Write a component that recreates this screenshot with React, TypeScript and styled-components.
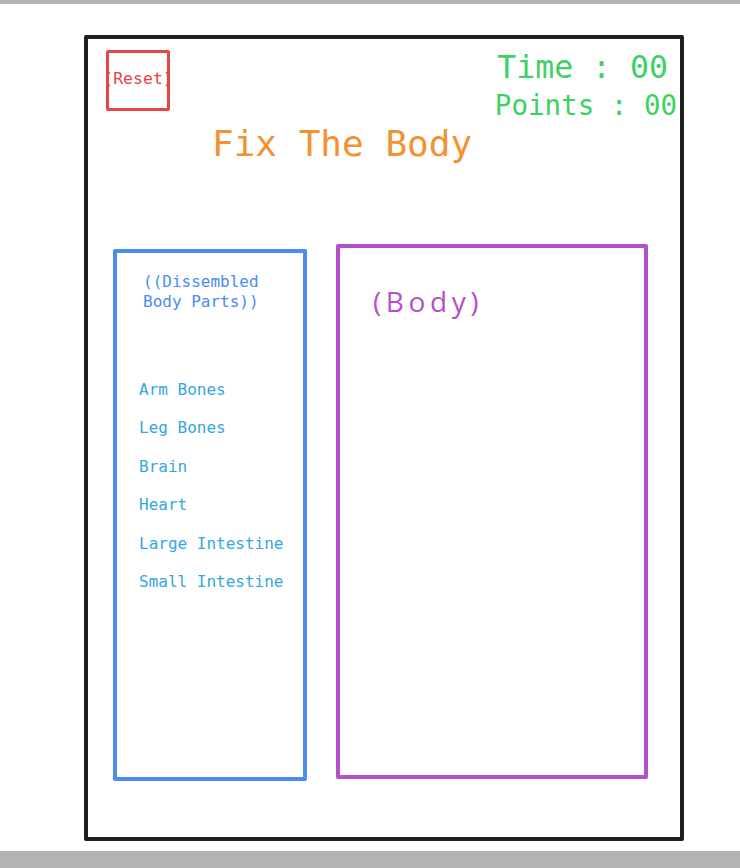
import * as React from 'react';
import styled, { createGlobalStyle } from 'styled-components';

const GlobalStyle = createGlobalStyle`
    html, body {
        margin: 0;
        padding: 0;
        background: #ffffff;
    }
    body {
        font-family: 'DejaVu Sans Mono', 'Liberation Mono', monospace;
    }
`

const Page = styled.div`
    width: 740px;
    height: 868px;
    display: flex;
    flex-direction: column;
    overflow: hidden;
`

const GreyBar = styled.div<{ $height: number }>`
    height: ${p => p.$height}px;
    background: #b3b3b3;
    flex-shrink: 0;
`

const Stage = styled.div`
    flex: 1;
    padding: 31px 0 0 84px;
`

const Frame = styled.div`
    box-sizing: border-box;
    width: 600px;
    height: 806px;
    border: 4px solid #1f1f1f;
    border-radius: 2px;
    padding: 11px 0 0 18px;
    display: flex;
    flex-direction: column;
`

const Header = styled.div`
    display: flex;
    justify-content: space-between;
    align-items: flex-start;
`

const ResetButton = styled.button`
    box-sizing: border-box;
    width: 64px;
    height: 61px;
    border: 3px solid #e84444;
    border-radius: 2px;
    background: transparent;
    padding: 0 0 4px;
    display: flex;
    align-items: center;
    justify-content: center;
    overflow: visible;
    white-space: nowrap;
    color: #e84444;
    font-family: 'DejaVu Sans Mono', monospace;
    font-size: 16.5px;
    line-height: 20px;
    cursor: pointer;
`

const Stats = styled.div`
    display: flex;
    flex-direction: column;
    align-items: flex-end;
    color: #3dd163;
`

const StatLine = styled.div<{ $size: number; $line: number; $right: number; $top: number }>`
    font-size: ${p => p.$size}px;
    line-height: ${p => p.$line}px;
    margin-right: ${p => p.$right}px;
    margin-top: ${p => p.$top}px;
    white-space: pre;
`

const Title = styled.h1`
    margin: 3px 0 0 106px;
    font-size: 36px;
    line-height: 42px;
    font-weight: normal;
    color: #f29233;
    white-space: pre;
`

const Workspace = styled.div`
    margin-top: 79px;
    display: flex;
    align-items: flex-start;
    gap: 29px;
`

const Panel = styled.div<{ $color: string; $width: number; $height: number; $top: number; $left: number }>`
    box-sizing: border-box;
    width: ${p => p.$width}px;
    height: ${p => p.$height}px;
    margin-top: ${p => p.$top}px;
    margin-left: ${p => p.$left}px;
    border: 4px solid ${p => p.$color};
    border-radius: 2px;
`

const PartsHeading = styled.div`
    margin: 19px 0 0 26px;
    font-size: 16px;
    line-height: 20px;
    color: #4a8cf0;
`

const PartList = styled.ul`
    list-style: none;
    margin: 68px 0 0 22px;
    padding: 0;
    display: flex;
    flex-direction: column;
    gap: 18.4px;
`

const PartItem = styled.li`
    font-size: 16px;
    line-height: 20px;
    color: #35a7de;
    white-space: pre;
`

const BodyLabel = styled.div`
    margin: 35px 0 0 33px;
    font-family: 'Open Sans', 'Noto Sans', sans-serif;
    font-size: 28px;
    line-height: 36px;
    letter-spacing: 4.6px;
    color: #b54fcc;
`

const parts = ['Arm Bones', 'Leg Bones', 'Brain', 'Heart', 'Large Intestine', 'Small Intestine'];

const App: React.FC = () => {
    const [time] = React.useState('00');
    const [points] = React.useState('00');
    return (
        <Page>
            <GlobalStyle />
            <GreyBar $height={4} />
            <Stage>
                <Frame>
                    <Header>
                        <ResetButton>(Reset)</ResetButton>
                        <Stats>
                            <StatLine $size={31.5} $line={34} $right={12} $top={0}>Time : {time}</StatLine>
                            <StatLine $size={27.5} $line={30} $right={3} $top={6}>Points : {points}</StatLine>
                        </Stats>
                    </Header>
                    <Title>Fix The Body</Title>
                    <Workspace>
                        <Panel $color="#4a8cf0" $width={194} $height={532} $top={5} $left={7}>
                            <PartsHeading>
                                <div>((Dissembled</div>
                                <div>Body Parts))</div>
                            </PartsHeading>
                            <PartList>
                                {parts.map(part => <PartItem key={part}>{part}</PartItem>)}
                            </PartList>
                        </Panel>
                        <Panel $color="#b54fcc" $width={312} $height={535} $top={0} $left={0}>
                            <BodyLabel>(Body)</BodyLabel>
                        </Panel>
                    </Workspace>
                </Frame>
            </Stage>
            <GreyBar $height={17} />
        </Page>
    );
}

export default App;
